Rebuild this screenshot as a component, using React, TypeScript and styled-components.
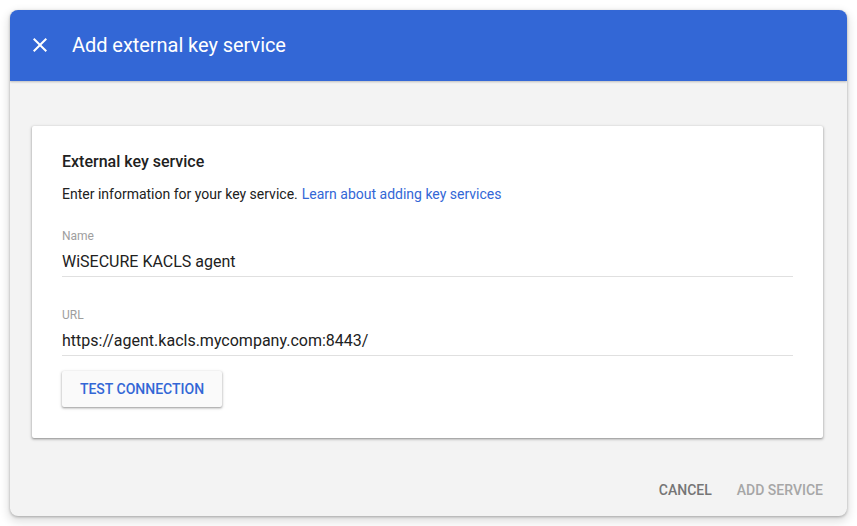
import React from "react";
import styled, { createGlobalStyle } from "styled-components";

const GlobalStyle = createGlobalStyle`
  html, body { margin: 0; padding: 0; background: #ffffff; }
  body { font-family: Roboto, "Noto Sans", Arial, sans-serif; -webkit-font-smoothing: antialiased; }
  * { box-sizing: border-box; }
`;

const Page = styled.div`
  padding: 10px;
  width: 857px;
  height: 526px;
`;

const Dialog = styled.div`
  width: 837px;
  height: 506px;
  border-radius: 8px;
  background: #f3f3f3;
  overflow: hidden;
  display: flex;
  flex-direction: column;
  box-shadow: 0 1px 3px rgba(0, 0, 0, 0.28), 0 4px 10px 2px rgba(0, 0, 0, 0.12);
`;

const Header = styled.header`
  height: 71px;
  flex: none;
  background: #3367d6;
  display: flex;
  align-items: center;
  padding-left: 18px;
  padding-bottom: 1px;
  gap: 20px;
  position: relative;
  z-index: 1;
  box-shadow: 0 1px 2px rgba(0, 0, 0, 0.22);
`;

const CloseButton = styled.button`
  width: 24px;
  height: 24px;
  padding: 0;
  border: 0;
  background: transparent;
  display: flex;
  align-items: center;
  justify-content: center;
  cursor: pointer;
`;

const Title = styled.h1`
  margin: 0;
  font-size: 20px;
  font-weight: 400;
  color: #ffffff;
  line-height: 24px;
  letter-spacing: -0.05px;
`;

const Body = styled.div`
  flex: 1;
  display: flex;
  flex-direction: column;
  padding: 45px 24px 0 22px;
`;

const Card = styled.section`
  background: #ffffff;
  border-radius: 2px;
  padding: 26px 30px 31px 30px;
  box-shadow: 0 1px 2px rgba(0, 0, 0, 0.3), 0 1px 3px 1px rgba(0, 0, 0, 0.12);
  display: flex;
  flex-direction: column;
`;

const CardTitle = styled.h2`
  margin: 0;
  font-size: 16px;
  line-height: 20px;
  font-weight: 500;
  color: #212121;
`;

const Description = styled.p`
  margin: 12px 0 0 0;
  font-size: 14px;
  line-height: 20px;
  color: #212121;
`;

const Link = styled.a`
  color: #3367d6;
  text-decoration: none;
  margin-left: 4px;
`;

const Field = styled.div<{ $gap: number }>`
  margin-top: ${(p) => p.$gap}px;
  display: flex;
  flex-direction: column;
`;

const Label = styled.label`
  font-size: 12px;
  line-height: 16px;
  color: #9e9e9e;
`;

const Value = styled.div`
  margin-top: 6px;
  font-size: 16px;
  line-height: 24px;
  color: #212121;
  padding-bottom: 2px;
  border-bottom: 1px solid #e0e0e0;
`;

const RaisedButton = styled.button`
  margin-top: 15px;
  align-self: flex-start;
  height: 36px;
  width: 160px;
  border: 0;
  border-radius: 2px;
  background: #fafafa;
  color: #3367d6;
  font-family: Roboto, Arial, sans-serif;
  font-size: 14px;
  font-weight: 500;
  text-transform: uppercase;
  box-shadow: 0 1px 2px rgba(0, 0, 0, 0.3), 0 1px 3px 1px rgba(0, 0, 0, 0.1);
  cursor: pointer;
`;

const Footer = styled.footer`
  display: flex;
  justify-content: flex-end;
  align-items: center;
  padding-top: 34px;
  gap: 9px;
  margin-right: -8px;
`;

const FlatButton = styled.button<{ $disabled?: boolean }>`
  height: 36px;
  padding: 0 8px;
  border: 0;
  background: transparent;
  font-family: Roboto, Arial, sans-serif;
  font-size: 14px;
  font-weight: 500;
  text-transform: uppercase;
  color: ${(p) => (p.$disabled ? "#a6a6a6" : "#757575")};
  cursor: ${(p) => (p.$disabled ? "default" : "pointer")};
`;

const CloseIcon = () => (
  <svg width="24" height="24" viewBox="0 0 24 24" aria-hidden="true">
    <path
      fill="#ffffff"
      d="M19 6.41L17.59 5 12 10.59 6.41 5 5 6.41 10.59 12 5 17.59 6.41 19 12 13.41 17.59 19 19 17.59 13.41 12z"
    />
  </svg>
);

export default function App() {
  return (
    <>
      <GlobalStyle />
      <Page>
        <Dialog>
          <Header>
            <CloseButton aria-label="Close">
              <CloseIcon />
            </CloseButton>
            <Title>Add external key service</Title>
          </Header>
          <Body>
            <Card>
              <CardTitle>External key service</CardTitle>
              <Description>
                Enter information for your key service.
                <Link href="#">Learn about adding key services</Link>
              </Description>
              <Field $gap={24}>
                <Label>Name</Label>
                <Value>WiSECURE KACLS agent</Value>
              </Field>
              <Field $gap={30}>
                <Label>URL</Label>
                <Value>https://agent.kacls.mycompany.com:8443/</Value>
              </Field>
              <RaisedButton>Test connection</RaisedButton>
            </Card>
            <Footer>
              <FlatButton>Cancel</FlatButton>
              <FlatButton $disabled>Add service</FlatButton>
            </Footer>
          </Body>
        </Dialog>
      </Page>
    </>
  );
}
